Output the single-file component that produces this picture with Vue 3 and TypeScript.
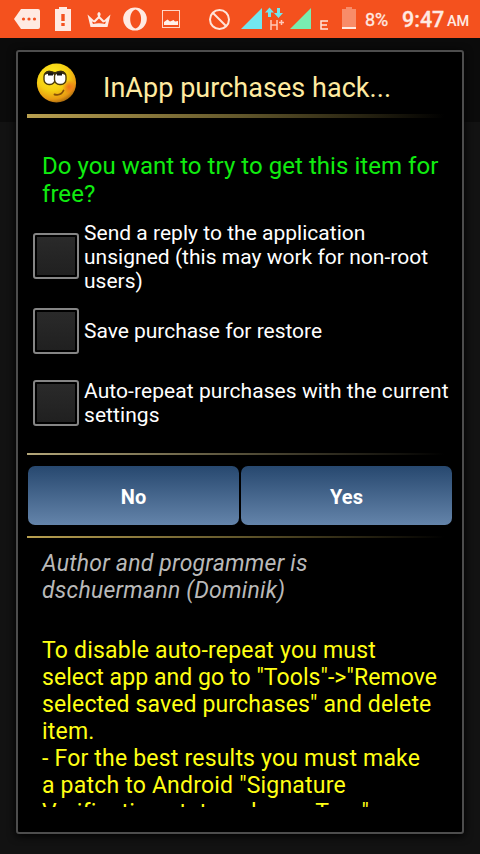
<script setup lang="ts">
interface Option {
  lines: string[]
  kind: string
}

const options: Option[] = [
  { lines: ['Send a reply to the application', 'unsigned (this may work for non-root', 'users)'], kind: 'tall' },
  { lines: ['Save purchase for restore'], kind: 'single' },
  { lines: ['Auto-repeat purchases with the current', 'settings'], kind: 'double' },
]

const notes: string[] = [
  'To disable auto-repeat you must',
  'select app and go to "Tools"->"Remove',
  'selected saved purchases" and delete',
  'item.',
  '- For the best results you must make',
  'a patch to Android "Signature',
  'Verification status always True"',
]
</script>

<template>
  <div class="screen">
    <header class="status">
      <svg class="tray" width="364" height="38" viewBox="0 0 364 38">
        <g fill="#ffeae2">
          <path d="M21 9H38Q40 9 40 11V27Q40 29 38 29H21L14 19Z" />
          <path d="M59 7H67V9H71V31H55V9H59Z" />
          <path d="M87.500 14.500L94 20.500L98 16.500L97.300 14Q99 10 100.700 14L100 16.500L104 20.500L110.500 14.500L107.500 27H90.500ZM92 21.500L93 24Q99 22.500 105 24L106 21.500L103 22.500L99 18.500L95 22.500Z" fill-rule="evenodd" />
          <path d="M135 7.500A11.800 11.500 0 1 0 135 30.500A11.800 11.500 0 1 0 135 7.500ZM135.500 9.500C143 11 143 27 135.500 28.500C128.500 27 128.500 11 135.500 9.500Z" fill-rule="evenodd" />
        </g>
        <g fill="#f4511e">
          <circle cx="23.500" cy="19" r="1.600" />
          <circle cx="29" cy="19" r="1.600" />
          <circle cx="34.500" cy="19" r="1.600" />
          <path d="M61.300 14H64.700V21H61.300ZM61.300 23H64.700V26H61.300Z" />
        </g>
        <rect x="162.500" y="10.500" width="17" height="17" fill="none" stroke="#ffd5c5" />
        <path d="M164 25V22L167.500 19.500L170 21.500L173.500 20L175 21.500L178 21V25Z" fill="#fff0e9" />
        <circle cx="219.500" cy="19.500" r="9.500" fill="none" stroke="#ffe4d9" stroke-width="2" />
        <path d="M213 13L226 26" stroke="#ffe4d9" stroke-width="2" />
        <path d="M241 29L262 8V29Z" fill="#72e7ef" />
        <path d="M290 29L311 8V29Z" fill="#79ecb0" />
        <path d="M265 12.500L269.500 7.500L274 12.500H271V17H268V12.500ZM274 13H277V8H280V13H283L278.500 18Z" fill="#72e7ef" />
        <path d="M271 20V30M277 20V30M271 25H277M279 22.500H284M281.500 20V25" stroke="#ffc8b8" stroke-width="1.500" fill="none" />
        <path d="M328 21H321V29H328M321 25H327" stroke="#ffe4d9" stroke-width="1.500" fill="none" />
        <path d="M346 7H352V9H356V27H342V9H346Z" fill="#f88c69" />
        <rect x="342" y="27" width="14" height="2" fill="#ffeae2" />
      </svg>
      <span class="percent">8%</span>
      <span class="clock">9:47</span>
      <span class="meridiem">AM</span>
    </header>

    <main class="dialog">
      <div class="heading">
        <svg class="face" width="42" height="42" viewBox="0 0 42 42">
          <defs>
            <radialGradient id="skin" cx=".4" cy=".3" r=".72">
              <stop offset="0" stop-color="#ffec24" />
              <stop offset=".55" stop-color="#f5cf12" />
              <stop offset=".85" stop-color="#e99a12" />
              <stop offset="1" stop-color="#a86a10" />
            </radialGradient>
            <radialGradient id="blush">
              <stop offset="0" stop-color="#f0661c" stop-opacity=".85" />
              <stop offset="1" stop-color="#f0661c" stop-opacity="0" />
            </radialGradient>
          </defs>
          <circle cx="20.500" cy="21" r="19.600" fill="url(#skin)" />
          <circle cx="33" cy="25" r="7" fill="url(#blush)" />
          <rect x="8" y="9.500" width="11" height="13" rx="5" fill="#fff" stroke="#4c3b0b" stroke-width="1.400" />
          <rect x="18.500" y="9.500" width="11.500" height="13" rx="5" fill="#fff" stroke="#4c3b0b" stroke-width="1.400" />
          <path d="M8 13Q9 9 13 8.800L19 10L25 8.800Q29 9 30 13L25 11.500L19 12.500L13 11.500Z" fill="#3b3010" />
          <rect x="12" y="10.500" width="5" height="3" fill="#181818" />
          <rect x="21" y="10.500" width="5" height="3" fill="#181818" />
          <path d="M18.500 32.500Q25 34 27.500 28.500" stroke="#885008" stroke-width="1.800" fill="none" stroke-linecap="round" />
        </svg>
        <h1>InApp purchases hack...</h1>
      </div>
      <div class="rule thick"></div>
      <p class="question">Do you want to try to get this item for<br />free?</p>
      <div v-for="o in options" :key="o.kind" class="option" :class="o.kind">
        <span class="box"></span>
        <span class="label"><span v-for="l in o.lines" :key="l" class="line">{{ l }}</span></span>
      </div>
      <div class="rule pale"></div>
      <div class="buttons">
        <button>No</button>
        <button>Yes</button>
      </div>
      <div class="rule"></div>
      <div class="scroll">
        <p class="author">Author and programmer is<br />dschuermann (Dominik)</p>
        <p class="notes"><span v-for="n in notes" :key="n" class="line">{{ n }}</span></p>
      </div>
    </main>
  </div>
</template>

<style>
body {
  margin: 0;
  background: #111;
}
</style>

<style scoped>
.screen {
  box-sizing: border-box;
  width: 480px;
  height: 854px;
  overflow: hidden;
  background: linear-gradient(#0b0b0b 0 122px, #121212 122px);
  font-family: Roboto, "Liberation Sans", sans-serif;
  white-space: nowrap;
}
.status {
  display: flex;
  height: 38px;
  background: #f4511e;
  color: #ffeae2;
}
.tray {
  flex: none;
}
.percent {
  width: 38px;
  padding-left: 1px;
  box-sizing: border-box;
  font-size: 18px;
  line-height: 40px;
  -webkit-text-stroke: 0.3px #ffeae2;
}
.clock {
  width: 45px;
  font-size: 21.5px;
  font-weight: 500;
  line-height: 40px;
  -webkit-text-stroke: 0.3px #ffeae2;
}
.meridiem {
  font-size: 14.5px;
  font-weight: 500;
  line-height: 44px;
}
.dialog {
  box-sizing: border-box;
  width: 448px;
  height: 784px;
  margin: 12px 16px 0;
  padding: 0 9px;
  border: 2px solid #4d4d4d;
  border-radius: 3px;
  background: #000;
  box-shadow: 0 2px 9px #000;
}
.heading {
  display: flex;
  height: 62px;
  padding-left: 9px;
}
.face {
  flex: none;
  margin-top: 10px;
}
h1 {
  margin: 0 0 0 25px;
  color: #ffeba0;
  font-size: 27px;
  font-weight: 400;
  letter-spacing: 0.04px;
  line-height: 72px;
}
.rule {
  height: 2px;
  background: linear-gradient(90deg, #b9a050, #62572b 50%, #000 98%);
}
.thick {
  height: 4px;
}
.pale {
  margin-top: 13px;
  background: linear-gradient(90deg, #b4a77a, #57513a 50%, #000 98%);
}
.question {
  height: 98px;
  margin: 0;
  padding: 34px 0 0 15px;
  box-sizing: border-box;
  color: #10ec10;
  font-size: 24px;
  letter-spacing: 0.05px;
  line-height: 28px;
}
.option {
  display: flex;
  align-items: center;
  padding-left: 6px;
  color: #fff;
  font-size: 21px;
  line-height: 24px;
}
.tall {
  height: 80px;
  letter-spacing: 0.02px;
}
.tall .label {
  padding-top: 2px;
}
.single {
  height: 70px;
  letter-spacing: -0.03px;
}
.double {
  height: 74px;
  letter-spacing: 0.07px;
}
.box {
  box-sizing: border-box;
  width: 46px;
  height: 46px;
  margin-right: 5px;
  padding: 2px;
  border: 2px solid #858585;
  border-radius: 3px;
  background: linear-gradient(#2a2a2a, #202020) content-box;
}
.line {
  display: block;
}
.buttons {
  display: grid;
  grid-template-columns: 211px 211px;
  gap: 2px;
  padding: 11px 1px;
}
button {
  height: 59px;
  padding: 3px 0 0;
  border: 0;
  border-radius: 7px;
  background: linear-gradient(#27486f, #6484aa);
  color: #fff;
  font: 700 20px Roboto, sans-serif;
  letter-spacing: 0.1px;
}
.scroll {
  height: 269px;
  padding-left: 15px;
  overflow: hidden;
  font-size: 23px;
  line-height: 27px;
}
.author {
  margin: 12px 0 33px;
  color: #b9b9b9;
  font-style: italic;
  letter-spacing: 0.22px;
}
.notes {
  margin: 0;
  color: #ffff14;
}
.notes .line {
  letter-spacing: 0.2px;
}
.notes .line:nth-child(2) {
  letter-spacing: 0.07px;
}
.notes .line:nth-child(3) {
  letter-spacing: 0.14px;
}
</style>
